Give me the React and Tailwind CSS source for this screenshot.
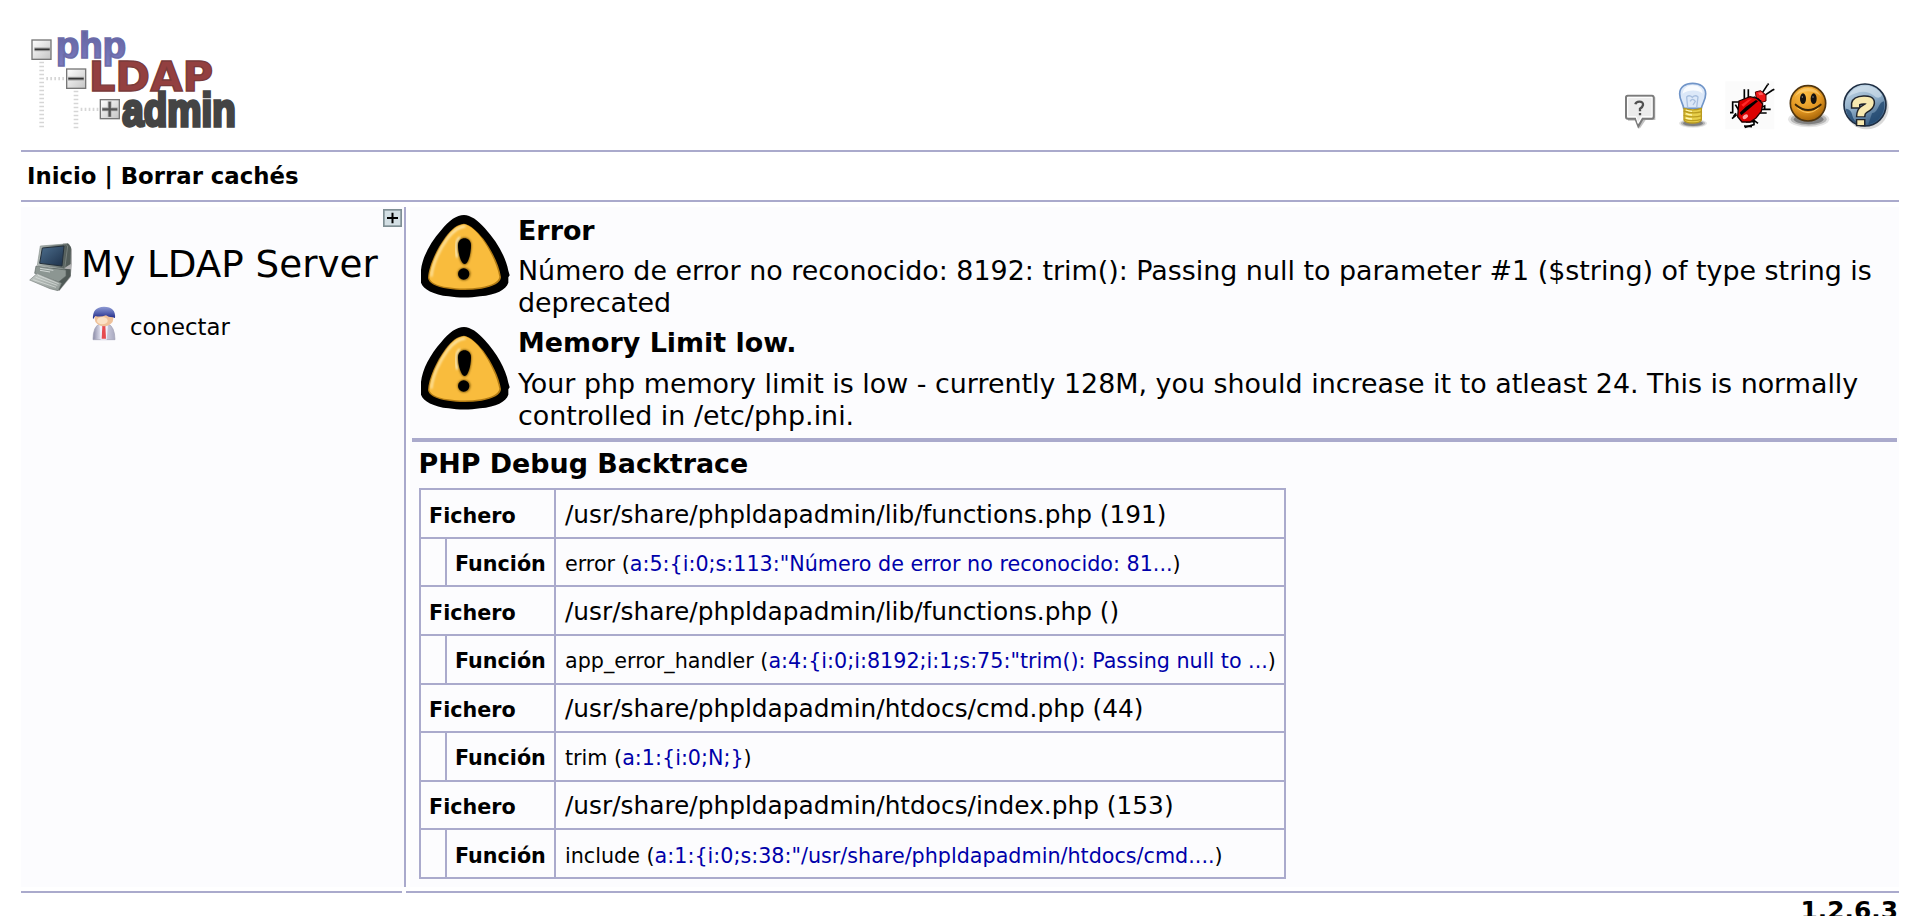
import React from "react";

const TRACE = [
  { file: "/usr/share/phpldapadmin/lib/functions.php (191)", fn: "error", args: 'a:5:{i:0;s:113:"Número de error no reconocido: 81...', fileRow: "h-[49px]", filePad: "pt-[3px]", bigPad: "pt-[2px]", fnRow: "h-[48px]", fnPad: "pt-[2px]" },
  { file: "/usr/share/phpldapadmin/lib/functions.php ()", fn: "app_error_handler", args: 'a:4:{i:0;i:8192;i:1;s:75:"trim(): Passing null to ...', fileRow: "h-[49px]", filePad: "pt-[3px]", bigPad: "pt-[2px]", fnRow: "h-[49px]", fnPad: "pt-[2px]" },
  { file: "/usr/share/phpldapadmin/htdocs/cmd.php (44)", fn: "trim", args: "a:1:{i:0;N;}", fileRow: "h-[48px]", filePad: "pt-[2px]", bigPad: "pt-px", fnRow: "h-[49px]", fnPad: "pt-[2px]" },
  { file: "/usr/share/phpldapadmin/htdocs/index.php (153)", fn: "include", args: 'a:1:{i:0;s:38:"/usr/share/phpldapadmin/htdocs/cmd....', fileRow: "h-[48px]", filePad: "pt-[2px]", bigPad: "pt-px", fnRow: "h-[49px]", fnPad: "pt-[3px]" },
];

function Logo() {
  return (
    <svg className="block h-[100px] w-[207px] overflow-visible" viewBox="90 90 621 300">
      <defs>
        <linearGradient id="box" x1="0" y1="0" x2="1" y2="1">
          <stop offset="0" stopColor="#ffffff" />
          <stop offset="1" stopColor="#c4c4c4" />
        </linearGradient>
        <linearGradient id="lphp" x1="0" y1="0" x2="0" y2="1">
          <stop offset="0" stopColor="#5f5f9e" />
          <stop offset="1" stopColor="#7c7cc0" />
        </linearGradient>
      </defs>
      <g stroke="#d6d6d6" strokeDasharray="5 7">
        <path d="M125 185V386M228 272V386" strokeWidth="14" />
        <path d="M139 236H196M242 328H298" strokeWidth="10" />
      </g>
      <g fill="url(#box)" stroke="#777" strokeWidth="4">
        <rect x="96" y="120" width="57" height="58" />
        <rect x="200" y="207" width="57" height="58" />
        <rect x="301" y="299" width="57" height="57" />
      </g>
      <path d="M103 148H150M204 236H252M306 328H353M329 304V351" stroke="#b5b5b5" strokeWidth="12" />
      <path d="M104 148H149M205 236H251" stroke="#333" strokeWidth="5" />
      <path d="M307 328H352M329 305V350" stroke="#555" strokeWidth="7" />
      <text x="168" y="175" fontFamily="Liberation Sans" fontWeight="bold" fontSize="108" textLength="210" lengthAdjust="spacingAndGlyphs" fill="url(#lphp)" stroke="#6c6ca8" strokeWidth="5">php</text>
      <text x="266" y="272" fontFamily="DejaVu Sans" fontWeight="bold" fontSize="121" textLength="374" lengthAdjust="spacingAndGlyphs" fill="#934040" stroke="#7a3a3a" strokeWidth="4">LDAP</text>
      <text x="367" y="377" fontFamily="Liberation Sans" fontWeight="bold" fontSize="137" textLength="340" lengthAdjust="spacingAndGlyphs" fill="#444" stroke="#444" strokeWidth="10">admin</text>
    </svg>
  );
}

function Shadow({ cx, cy, rx, ry }) {
  return (
    <g fill="#000">
      <ellipse cx={cx} cy={cy} rx={rx} ry={ry} opacity=".1" />
      <ellipse cx={cx} cy={cy} rx={rx * 0.87} ry={ry * 0.8} opacity=".2" />
      <ellipse cx={cx} cy={cy} rx={rx * 0.72} ry={ry * 0.6} opacity=".3" />
    </g>
  );
}

function HeaderIcons() {
  return (
    <div className="flex">
      <svg className="h-[52px] w-[50px]" viewBox="51 60 150 156">
        <path d="M84 112H166V180H137L119 206L110 182H84Z" fill="#999" opacity=".6" />
        <path d="M83 107H156Q161 107 161 112V170Q161 176 156 176H128L115 199L106 176H83Q78 176 78 170V112Q78 107 83 107Z" fill="#ececec" stroke="#7b7b7b" strokeWidth="6" />
        <path d="M83 112H156V170H125L114 190L108 170H83Z" fill="none" stroke="#fff" strokeWidth="3" />
        <path d="M106 133Q108 125 118 125Q130 125 129 135Q128 141 120 146V154M120 159V166" fill="none" stroke="#505050" strokeWidth="7" />
      </svg>
      <svg className="h-[52px] w-[55px]" viewBox="201 60 165 156">
        <Shadow cx={279} cy={190} rx={42} ry={13} />
        <path d="M251 145C249 130 239 121 239 101C239 80 257 70 278 70C299 70 317 80 317 101C317 121 307 130 304 145Z" fill="#dce8f8" stroke="#6f94c8" strokeWidth="5" />
        <path d="M248 101C250 82 265 76 278 76C295 76 308 85 308 101C295 88 265 88 248 101Z" fill="#fff" opacity=".8" />
        <path d="M263 143L260 111Q268 103 277 112Q286 103 294 111L290 143M270 124Q278 112 286 124L279 135" fill="none" stroke="#a8bfdf" strokeWidth="4" />
        <path d="M252 145Q278 154 304 145V180Q300 189 278 189Q256 189 252 180Z" fill="#e8cf4a" stroke="#b99a1f" strokeWidth="4" />
        <path d="M251 153Q278 163 306 155M251 166Q278 175 306 167M252 178Q278 186 304 178" fill="none" stroke="#ba9c20" strokeWidth="4" />
        <path d="M258 150Q268 154 276 154M258 161Q268 165 276 165M258 174Q268 177 276 177" fill="none" stroke="#fff6b0" strokeWidth="4" />
      </svg>
      <svg className="h-[52px] w-[57px]" viewBox="366 60 171 156">
        <rect x="376" y="64" width="147" height="144" fill="#fbfbfb" />
        <path d="M433 88V118M445 88V122M390 158H398V126H420M480 148H512M474 159H500M486 100L503 74M494 106L518 90M410 164L396 176M438 186L462 184V194L434 202M455 176L474 190" fill="none" stroke="#000" strokeWidth="5" />
        <path d="M503 74L506 71M517 91L523 88M484 142L494 138V148M408 160L400 170M406 134L416 150M432 198L456 200" fill="none" stroke="#000" strokeWidth="5" />
        <path d="M466 96L482 92L498 105V123L482 128L470 122Z" fill="#f01818" stroke="#500" strokeWidth="3" />
        <path d="M417 123L450 110L474 116L488 132L484 154L468 174L450 186H426L413 170Z" fill="#db0000" stroke="#200" strokeWidth="4" />
        <path d="M460 108L478 124L487 124L462 108Z" fill="#000" />
        <path d="M419 158L438 140L468 120L474 124L446 148L424 166Z" fill="#000" />
        <path d="M424 134L444 120L456 116L430 140Z" fill="#ff2828" />
        <ellipse cx="436" cy="170" rx="9" ry="6" fill="#ffa0a0" transform="rotate(-35 436 170)" />
        <path d="M474 98L486 97L490 104L478 106Z" fill="#ff5a5a" />
      </svg>
      <svg className="h-[52px] w-[58px]" viewBox="537 60 174 156">
        <defs>
          <radialGradient id="smile" cx=".4" cy=".25" r=".8">
            <stop offset="0" stopColor="#fbbd45" />
            <stop offset=".6" stopColor="#e09420" />
            <stop offset="1" stopColor="#9c5c05" />
          </radialGradient>
        </defs>
        <Shadow cx={626} cy={178} rx={62} ry={24} />
        <circle cx="624" cy="130" r="53" fill="url(#smile)" stroke="#4f3510" strokeWidth="5" />
        <path d="M583 112Q596 84 624 84Q652 84 665 112Q650 94 624 94Q598 94 583 112Z" fill="#ffd680" opacity=".6" />
        <ellipse cx="609" cy="116" rx="9" ry="16" fill="#141210" />
        <ellipse cx="641" cy="116" rx="9" ry="16" fill="#141210" />
        <path d="M607 108V114M639 108V114" stroke="#777" strokeWidth="3" />
        <path d="M587 134Q624 166 662 134" fill="none" stroke="#3a2608" strokeWidth="6" strokeLinecap="round" />
        <path d="M592 144Q624 172 656 144" fill="none" stroke="#ffc75c" strokeWidth="3" />
      </svg>
      <svg className="h-[52px] w-[58px]" viewBox="711 60 174 156">
        <defs>
          <linearGradient id="globe" x1=".2" y1="0" x2=".7" y2="1">
            <stop offset="0" stopColor="#c3d7e6" />
            <stop offset=".5" stopColor="#8cabc6" />
            <stop offset="1" stopColor="#2d537a" />
          </linearGradient>
        </defs>
        <circle cx="800" cy="142" r="66" fill="#000" opacity=".15" />
        <circle cx="795" cy="135" r="63" fill="url(#globe)" stroke="#1f2f44" strokeWidth="5" />
        <path d="M737 146C765 150 748 174 775 190C755 186 740 168 737 146ZM816 160C838 156 834 126 852 124C858 160 835 188 805 193Z" fill="#1f466d" opacity=".75" />
        <path d="M742 112Q760 76 802 77Q832 80 846 104Q838 122 820 106Q790 82 742 112Z" fill="#d8e6f0" opacity=".6" />
        <path d="M767 146V131Q769 121 791 120Q812 119 811 129Q810 139 794 147Q782 153 782 172M782 177V199" fill="none" stroke="#20242c" strokeWidth="29" />
        <path d="M767 142V131Q769 121 791 120Q812 119 811 129Q810 139 794 147Q782 153 782 169M782 181V195" fill="none" stroke="#f7e9b0" strokeWidth="20" />
      </svg>
    </div>
  );
}

function Computer() {
  return (
    <svg className="block h-[51px] w-[45px]" viewBox="84 153 135 153">
      <defs>
        <linearGradient id="scr" x1="0" y1="0" x2="1" y2="1">
          <stop offset="0" stopColor="#4d6f8e" />
          <stop offset="1" stopColor="#1d3049" />
        </linearGradient>
        <linearGradient id="cas" x1="0" y1="0" x2="1" y2="0">
          <stop offset="0" stopColor="#b5bdb9" />
          <stop offset="1" stopColor="#4e5855" />
        </linearGradient>
        <linearGradient id="kbd" x1="0" y1="0" x2="1" y2="1">
          <stop offset="0" stopColor="#c4cac7" />
          <stop offset="1" stopColor="#8f9894" />
        </linearGradient>
      </defs>
      <path d="M189 160L208 163L216 178V222L212 262L178 303L158 298L190 240Z" fill="#000" opacity=".3" />
      <path d="M187 163L204 160L213 172L212 222L190 236Z" fill="#525c59" />
      <path d="M150 233L212 238V258L178 301L172 296Z" fill="#4f5956" />
      <path d="M108 228L198 240V258L176 276L104 250Z" fill="#8c9692" stroke="#5c6562" strokeWidth="2" />
      <path d="M121 168L196 162L203 168L194 237L112 226Z" fill="url(#cas)" stroke="#8a9390" strokeWidth="2" />
      <path d="M127 174L192 168L186 228L119 220Z" fill="url(#scr)" stroke="#24303b" strokeWidth="3" />
      <path d="M89 270L112 250L184 280L174 302L150 296Z" fill="url(#kbd)" stroke="#7b8481" strokeWidth="2" />
      <path d="M100 269L168 292M107 262L172 286M114 256L176 281" stroke="#dfe4e1" strokeWidth="2" />
      <path d="M120 235L160 241M120 241L150 246" stroke="#d0d6d4" strokeWidth="3" />
    </svg>
  );
}

function User() {
  return (
    <svg className="block h-9 w-[26px]" viewBox="273 345 78 108">
      <defs>
        <linearGradient id="hair" x1="0" y1="0" x2="0" y2="1">
          <stop offset="0" stopColor="#8f9bd4" />
          <stop offset=".5" stopColor="#5562b0" />
          <stop offset="1" stopColor="#161c7c" />
        </linearGradient>
        <linearGradient id="coat" x1="0" y1="0" x2="1" y2="0">
          <stop offset="0" stopColor="#8a8aa6" />
          <stop offset=".35" stopColor="#e2e2f0" />
          <stop offset="1" stopColor="#a9a9c0" />
        </linearGradient>
      </defs>
      <path d="M279 449Q279 409 299 402H324Q344 409 345 449Z" fill="url(#coat)" stroke="#a0a0b4" strokeWidth="2" />
      <path d="M299 403L311 414L324 403L320 449H302Z" fill="#f1f1fb" />
      <path d="M307 408H316L318 446H305Z" fill="#e64b50" />
      <ellipse cx="312" cy="386" rx="28" ry="23" fill="#efc199" />
      <ellipse cx="307" cy="392" rx="16" ry="11" fill="#fbe2c6" />
      <path d="M279 388Q276 351 312 350Q348 351 345 384L338 382Q325 382 318 376Q300 382 286 378Z" fill="url(#hair)" />
    </svg>
  );
}

function Warning() {
  return (
    <svg className="block h-[85px] w-[90px] shrink-0" viewBox="60 42 270 255">
      <defs>
        <filter id="soft" x="-20%" y="-20%" width="140%" height="140%">
          <feGaussianBlur stdDeviation="3" />
        </filter>
      </defs>
      <path d="M192 45C212 46 233 60 254 84C290 123 317 170 325 212L329 226L325 232V248C317 270 290 284 240 289C210 294 175 294 146 289C100 284 70 268 63 248V210C67 172 90 128 124 90C148 60 170 46 192 45Z" fill="#000" />
      <path d="M192 71C212 74 232 95 250 116C275 150 298 195 303 232C302 248 280 260 245 266C210 271 175 271 145 266C105 261 86 248 84 234C86 200 108 150 136 112C155 86 172 73 192 71Z" fill="#b37c15" />
      <path d="M192 73C212 76 230 95 246 116C270 150 292 195 298 230C297 245 275 256 242 262C210 267 175 267 145 262C108 257 90 246 88 233C90 200 111 150 138 113C156 88 173 75 192 73Z" fill="#f9bc3d" />
      <path d="M94 230C97 195 118 148 142 116C160 92 176 80 196 79" fill="none" stroke="#fff2c4" strokeWidth="5" filter="url(#soft)" />
      <path d="M172 172Q163 128 180 112" fill="none" stroke="#fff6cf" strokeWidth="7" filter="url(#soft)" />
      <path d="M173 136C173 106 214 106 214 136C214 160 207 194 194 194C181 194 173 160 173 136Z" fill="#6b4a08" filter="url(#soft)" />
      <path d="M174 136C174 108 213 108 213 136C213 160 205 192 194 192C183 192 174 160 174 136Z" fill="#000" />
      <circle cx="192" cy="222" r="19" fill="#7a540c" filter="url(#soft)" />
      <circle cx="191" cy="222" r="17" fill="#000" />
    </svg>
  );
}

function Message({ title, gap, children }) {
  return (
    <div className="flex h-28 pl-[10px] pt-[7px]">
      <Warning />
      <div className="min-w-0 flex-1 pl-[8px] pt-px text-[26.9px] leading-8">
        <div className="font-bold">{title}</div>
        <div className={gap}>{children}</div>
      </div>
    </div>
  );
}

function Backtrace() {
  return (
    <div className="ml-[9px] mt-2 w-[867px] border-x-2 border-b-2 border-[#aaaacc] text-[20.7px] leading-[46px]">
      {TRACE.map((t) => (
        <React.Fragment key={t.fn}>
          <div className={"flex border-t-2 border-[#aaaacc] " + t.fileRow}>
            <div className={"w-[135px] border-r-2 border-[#aaaacc] pl-[8px] font-bold " + t.filePad}>Fichero</div>
            <div className={"whitespace-nowrap pl-[9px] text-[24.82px] leading-[45px] " + t.bigPad}>{t.file}</div>
          </div>
          <div className={"flex border-t-2 border-[#aaaacc] " + t.fnRow}>
            <div className="w-[26px] border-r-2 border-[#aaaacc]" />
            <div className={"w-[109px] border-r-2 border-[#aaaacc] pl-[8px] font-bold " + t.fnPad}>Función</div>
            <div className={"whitespace-nowrap pl-[9px] " + t.fnPad}>
              {t.fn} (<a className="text-[#0000aa]">{t.args}</a>)
            </div>
          </div>
        </React.Fragment>
      ))}
    </div>
  );
}

export default function App() {
  return (
    <div className="flex h-[916px] w-full flex-col overflow-hidden bg-white pl-[21px] pr-[6px] font-['DejaVu_Sans',sans-serif] text-black">
      <header className="flex h-[152px] shrink-0 items-start justify-between border-b-2 border-[#aaaacc]">
        <div className="pl-[9px] pt-[30px]">
          <Logo />
        </div>
        <div className="pr-1 pt-20">
          <HeaderIcons />
        </div>
      </header>
      <nav className="h-[50px] shrink-0 whitespace-pre border-b-2 border-[#aaaacc] pl-[6px] text-[22.8px] font-bold leading-[48px]">
        <a>Inicio</a> | <a>Borrar cachés</a>
      </nav>
      <div className="mt-[5px] flex h-[680px] shrink-0">
        <aside className="w-[385px] shrink-0 border-r-2 border-[#aaaacc] bg-[#fcfcfe]">
          <div className="flex h-[34px] justify-end pr-[2px] pt-[2px]">
            <svg className="h-[18px] w-[19px]" viewBox="0 0 57 54">
              <rect x="2.5" y="2.5" width="52" height="49" fill="#d3dfe4" stroke="#7f8f94" strokeWidth="5" />
              <path d="M12 27H45M28.500 11V43" stroke="#000" strokeWidth="6" />
            </svg>
          </div>
          <div className="flex h-16 pl-[7px]">
            <Computer />
            <div className="whitespace-nowrap pl-[8px] pt-px text-[37.25px] leading-[44px]">My LDAP Server</div>
          </div>
          <div className="flex pl-[70px]">
            <User />
            <div className="pl-[13px] pt-[6px] text-[22.8px] leading-[32px]">conectar</div>
          </div>
        </aside>
        <main className="ml-1 flex-1 bg-[#fcfcfe]">
          <Message title="Error" gap="pt-2">
            Número de error no reconocido: 8192: trim(): Passing null to parameter #1 ($string) of type string is
            deprecated
          </Message>
          <Message title="Memory Limit low." gap="pt-[9px]">
            Your php memory limit is low - currently 128M, you should increase it to atleast 24. This is normally
            controlled in /etc/php.ini.
          </Message>
          <div className="ml-[2px] mr-[2px] mt-[7px] h-1 bg-[#aaaacc]" />
          <div className="mt-[6px] pl-[8.5px] text-[26.9px] font-bold leading-8">PHP Debug Backtrace</div>
          <Backtrace />
        </main>
      </div>
      <footer className="mt-1 shrink-0">
        <div className="flex gap-1">
          <div className="h-[2px] w-[381px] bg-[#aaaacc]" />
          <div className="h-[2px] flex-1 bg-[#aaaacc]" />
        </div>
        <div className="pr-[1px] pt-[3px] text-right text-[24.85px] font-bold leading-[29px]">1.2.6.3</div>
      </footer>
    </div>
  );
}
